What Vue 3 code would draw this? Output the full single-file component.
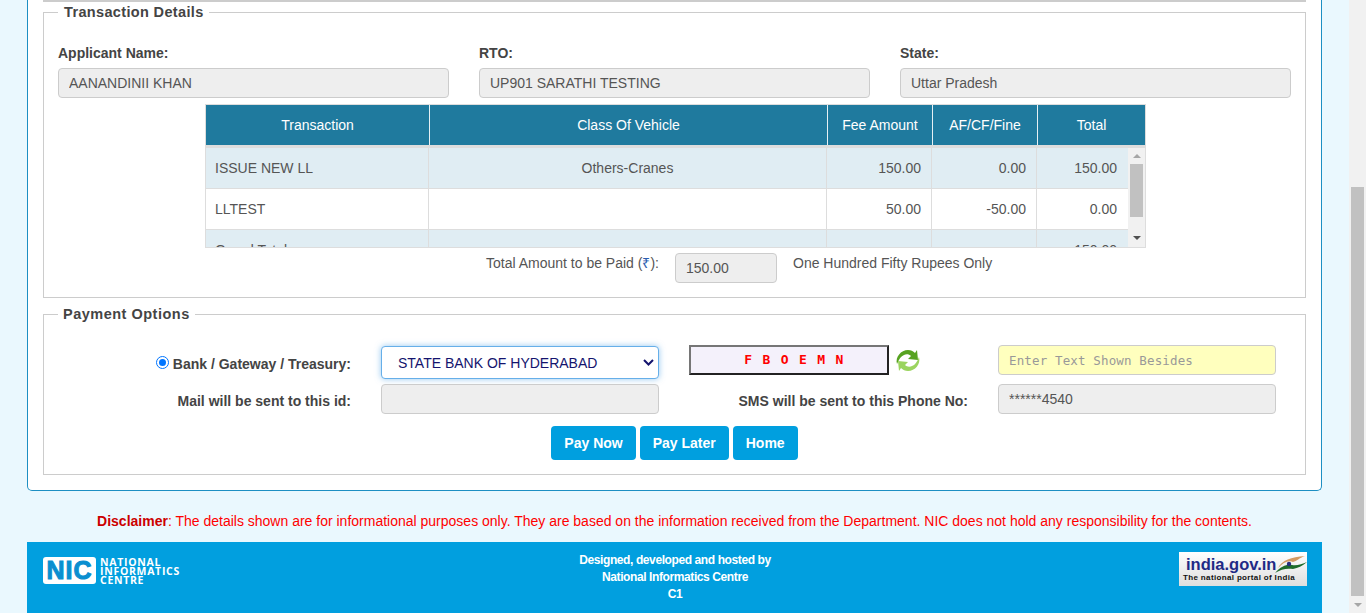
<script setup>
const info = [
  { label: 'Applicant Name:', value: 'AANANDINII KHAN' },
  { label: 'RTO:', value: 'UP901 SARATHI TESTING' },
  { label: 'State:', value: 'Uttar Pradesh' },
]
const rows = [
  { t: 'ISSUE NEW LL', c: 'Others-Cranes', f: '150.00', a: '0.00', total: '150.00' },
  { t: 'LLTEST', c: '', f: '50.00', a: '-50.00', total: '0.00' },
  { t: 'Grand Total', c: '', f: '', a: '', total: '150.00' },
]
</script>

<template>
  <div class="page">
    <div class="main">
      <div class="panel">
        <div class="prev-line"></div>
        <fieldset class="box first">
          <legend>Transaction Details</legend>
          <div class="info">
            <div v-for="i in info" :key="i.label" class="info-col">
              <label>{{ i.label }}</label>
              <input class="ctl" disabled :value="i.value" />
            </div>
          </div>
          <div class="table-wrap">
            <div class="thead">
              <div class="th c1">Transaction</div>
              <div class="th c2">Class Of Vehicle</div>
              <div class="th c3">Fee Amount</div>
              <div class="th c4">AF/CF/Fine</div>
              <div class="th c5">Total</div>
            </div>
            <div class="tscroll">
              <div class="tbody">
                <div v-for="(r, n) in rows" :key="r.t" class="tr" :class="{ odd: n % 2 === 0 }">
                  <div class="td c1">{{ r.t }}</div>
                  <div class="td c2 mid">{{ r.c }}</div>
                  <div class="td c3 num">{{ r.f }}</div>
                  <div class="td c4 num">{{ r.a }}</div>
                  <div class="td c5 num">{{ r.total }}</div>
                </div>
              </div>
              <div class="vbar">
                <i class="up"></i>
                <b class="thumb"></b>
                <i class="down"></i>
              </div>
            </div>
          </div>
          <div class="amount">
            <span>Total Amount to be Paid (<em>₹</em>):</span>
            <input class="ctl amt" disabled value="150.00" />
            <span>One Hundred Fifty Rupees Only</span>
          </div>
        </fieldset>

        <fieldset class="box second">
          <legend>Payment Options</legend>
          <div class="pay-row one">
            <div class="lbl left">
              <span class="radio"></span>
              <span>Bank / Gateway / Treasury:</span>
            </div>
            <div class="select">
              <span>STATE BANK OF HYDERABAD</span>
              <svg width="11" height="7" viewBox="0 0 11 7"><path d="M1 1l4.500 4.500L10 1" fill="none" stroke="#14146e" stroke-width="2"/></svg>
            </div>
            <div class="captcha-cell">
              <div class="captcha">F B O E M N</div>
              <svg class="refresh" width="26" height="23" viewBox="0 0 26 23">
                <path d="M2 15C0 8 6 1 13 1c3 0 5 1 7 3l2-3 1 10-10-1 3-3c-2-2-5-2-7-1-3 1-5 4-7 9z" fill="#57a321"/>
                <path d="M24 8c2 7-4 14-11 14-3 0-5-1-7-3l-2 3-1-10 10 1-3 3c2 2 5 2 7 1 3-1 5-4 7-9z" fill="#9bd45f"/>
              </svg>
            </div>
            <input class="ctl yellow" placeholder="Enter Text Shown Besides" />
          </div>
          <div class="pay-row two">
            <div class="lbl">Mail will be sent to this id:</div>
            <input class="ctl mail" disabled />
            <div class="lbl sms">SMS will be sent to this Phone No:</div>
            <input class="ctl phone" disabled value="******4540" />
          </div>
          <div class="btns">
            <button>Pay Now</button>
            <button>Pay Later</button>
            <button>Home</button>
          </div>
        </fieldset>
      </div>

      <p class="disclaimer"><b>Disclaimer</b>: The details shown are for informational purposes only. They are based on the information received from the Department. NIC does not hold any responsibility for the contents.</p>

      <footer>
        <div class="nic">
          <div class="nic-mark">NIC</div>
          <div class="nic-name">NATIONAL<br />INFORMATICS<br />CENTRE</div>
        </div>
        <div class="foot-text">
          <div>Designed, developed and hosted by</div>
          <div>National Informatics Centre</div>
          <div>C1</div>
        </div>
        <div class="india">
          <div class="india-top">
            <span>india.gov.in</span>
            <svg width="34" height="19" viewBox="0 0 34 19">
              <path d="M4 13C8 5 17 2 31 1c-6 2-8 5-12 6-5-2-10 1-15 6z" fill="#d29a62"/>
              <path d="M1 18c6-7 12-9 17-8 5 1 10-1 15-3-5 4-9 6-14 7-6-1-12 0-18 4z" fill="#1d6b2a"/>
              <circle cx="15" cy="9" r="2.200" fill="#27307f"/>
            </svg>
          </div>
          <div class="india-sub">The national portal of India</div>
        </div>
      </footer>
    </div>
    <div class="pagebar">
      <i class="up"></i>
      <b class="thumb"></b>
      <i class="down"></i>
    </div>
  </div>
</template>

<style>
html, body { margin: 0; height: 613px; overflow: hidden; background: #eaf8fe; }
</style>

<style scoped>
.page {
  display: flex;
  width: 1366px;
  height: 613px;
  overflow: hidden;
  font-family: "Liberation Sans", Arial, sans-serif;
  font-size: 14px;
  color: #555;
  background: #eaf8fe;
}
.main { width: 1349px; flex: none; padding: 0 27px; box-sizing: border-box; }
.panel {
  width: 1295px;
  height: 491px;
  box-sizing: border-box;
  background: #fff;
  border: 1px solid #1d8fc3;
  border-top: 0;
  border-radius: 0 0 5px 5px;
  padding: 0 15px;
}
.prev-line { height: 2px; background: #ccc; margin-bottom: 3px; }
.box {
  margin: 0;
  padding: 0 14px;
  border: 1px solid #ccc;
  min-width: 0;
  box-sizing: border-box;
}
legend {
  font-weight: bold;
  font-size: 14.500px;
  line-height: 14px;
  letter-spacing: .35px;
  color: #444;
  padding: 0 5px 0 6px;
  margin-left: 0;
}
.second legend { letter-spacing: .5px; padding-left: 5px; }
.first { height: 293px; }
.second { height: 168px; margin-top: 9px; }
.info { display: flex; gap: 30px; margin-top: 24px; }
.info-col { width: 391px; display: flex; flex-direction: column; }
.info-col label { font-weight: bold; color: #444; line-height: 20px; margin-bottom: 5px; }
.ctl {
  box-sizing: border-box;
  height: 30px;
  border: 1px solid #ccc;
  border-radius: 4px;
  background: #eee;
  padding: 0 10px;
  font: 14px "Liberation Sans", Arial, sans-serif;
  color: #555;
  opacity: 1;
  margin: 0;
  outline: 0;
}
.table-wrap {
  width: 941px;
  height: 144px;
  box-sizing: border-box;
  margin: 6px 0 0 147px;
  background: #ddd;
  padding: 1px 0 0 1px;
}
.thead { display: flex; height: 40px; background: #1f7a9e; width: 939px; }
.th {
  box-sizing: border-box;
  color: #fff;
  text-align: center;
  line-height: 40px;
  border-right: 1px solid #e6f0f4;
}
.th.c1 { width: 224px; }
.th.c2 { width: 398px; }
.th.c3 { width: 105px; }
.th.c4 { width: 105px; }
.th.c5 { width: 107px; border-right: 0; }
.tscroll {
  display: flex;
  height: 100px;
  margin-top: 3px;
  overflow: hidden;
  background: #fff;
  width: 939px;
  border-bottom: 1px solid #ddd;
  box-sizing: border-box;
}
.tbody { width: 922px; flex: none; }
.tr { display: flex; height: 41px; box-sizing: border-box; border-bottom: 1px solid #ddd; background: #fff; }
.tr.odd { background: #e0edf3; }
.td {
  box-sizing: border-box;
  line-height: 40px;
  padding: 0 9px;
  border-right: 1px solid #ddd;
  white-space: nowrap;
}
.td.c1 { width: 223px; }
.td.c2 { width: 398px; }
.td.c3 { width: 105px; }
.td.c4 { width: 105px; }
.td.c5 { width: 91px; border-right: 0; }
.mid { text-align: center; }
.num { text-align: right; }
.td.num { padding-right: 10px; }
.td.c5.num { padding-right: 11px; }
.vbar {
  position: relative;
  flex: none;
  width: 17px;
  background: #f1f1f1;
}
.thumb { position: absolute; background: #c1c1c1; display: block; }
.vbar .thumb { left: 2px; width: 13px; top: 16px; height: 53px; }
.up, .down { position: absolute; left: 50%; width: 0; height: 0; margin-left: -4px; border: 4px solid transparent; }
.up { border-bottom-color: #a6a6a6; border-top: 0; }
.down { border-top-color: #505050; border-bottom: 0; }
.vbar .up { top: 6px; }
.vbar .down { bottom: 7px; }
.amount {
  display: flex;
  align-items: flex-start;
  margin-top: 5px;
  padding-left: 428px;
  line-height: 20px;
}
.amount em { font-style: normal; color: #2a5db0; }
.amt { width: 102px; margin: 0 16px; }
.pay-row { display: flex; align-items: center; position: relative; }
.one { height: 33px; margin-top: 25px; }
.two { height: 30px; margin-top: 5px; }
.lbl {
  width: 293px;
  margin-right: 30px;
  text-align: right;
  font-weight: bold;
  color: #444;
  flex: none;
  box-sizing: border-box;
}
.two .lbl { padding-top: 3px; }
.left { display: flex; justify-content: flex-end; align-items: center; gap: 4px; padding-top: 2px; }
.radio {
  width: 13px;
  height: 13px;
  box-sizing: border-box;
  border-radius: 50%;
  border: 1px solid #0075ff;
  padding: 2px;
  background: #0075ff content-box;
  margin-top: -3px;
}
.select {
  width: 278px;
  height: 33px;
  flex: none;
  box-sizing: border-box;
  border: 1px solid #66afe9;
  border-radius: 4px;
  box-shadow: 0 0 6px rgba(102, 175, 233, .7);
  display: flex;
  align-items: center;
  justify-content: space-between;
  padding: 0 4px 0 16px;
  color: #14146e;
  background: #fff;
}
.captcha-cell { display: flex; align-items: center; align-self: flex-start; margin: -1px 0 0 30px; width: 309px; flex: none; }
.captcha {
  box-sizing: border-box;
  width: 200px;
  height: 30px;
  border: 2px solid;
  border-color: #767676 #222 #222 #767676;
  background: #f4f1fb;
  color: #f00;
  font: bold 13px/26px "DejaVu Sans Mono", monospace;
  letter-spacing: 1.300px;
  text-align: center;
  padding-left: 11px;
}
.refresh { margin-left: 6px; }
.yellow {
  width: 278px;
  align-self: flex-start;
  margin-top: -1px;
  background: #ffffbe;
  border-color: #ccc;
  font: 12.500px "DejaVu Sans Mono", monospace;
  letter-spacing: .14px;
}
.yellow::placeholder { color: #999; opacity: 1; }
.mail { width: 278px; flex: none; }
.sms { width: 309px; margin: 0 0 0 30px; padding-right: 30px; }
.two .sms { padding-right: 30px; }
.phone { width: 278px; flex: none; }
.btns { display: flex; gap: 4px; justify-content: center; margin-top: 12px; }
button {
  height: 34px;
  border: 0;
  border-radius: 4px;
  background: #009fdf;
  color: #fff;
  font: bold 14px "Liberation Sans", Arial, sans-serif;
  padding: 0 13px;
}
.disclaimer {
  margin: 0;
  height: 51px;
  line-height: 60px;
  text-align: center;
  color: #f00;
  font-size: 14px;
  white-space: nowrap;
}
.disclaimer b { color: #c00; }
footer {
  width: 1295px;
  height: 71px;
  background: #019fdf;
  color: #fff;
  display: grid;
  grid-template-columns: 1fr auto 1fr;
  padding: 10px 15px 0 16px;
  box-sizing: border-box;
}
.nic { display: flex; align-items: flex-start; gap: 4px; padding-top: 5px; }
.nic-mark {
  width: 53px;
  height: 27px;
  box-sizing: border-box;
  background: #fff;
  border-radius: 3px;
  color: #0a8fd0;
  -webkit-text-stroke: 1px #0a8fd0;
  font: 900 25px/27px "Liberation Sans", sans-serif;
  text-align: center;
  letter-spacing: 1px;
}
.nic-name { font: bold 10.500px/9px "Open Sans", "Liberation Sans", sans-serif; letter-spacing: .7px; padding-top: 1px; }
.foot-text { text-align: center; font-weight: bold; font-size: 12px; letter-spacing: -.4px; line-height: 17px; }
.india {
  justify-self: end;
  width: 128px;
  height: 34px;
  background: linear-gradient(#fff, #dedede);
  box-sizing: border-box;
  padding: 3px 0 0 4px;
}
.india-top { display: flex; align-items: center; height: 18px; padding-left: 3px; color: #1f2a86; font: bold 16.500px/18px "Liberation Sans", sans-serif; }
.india-top svg { margin-left: -2px; flex: none; }
.india-sub { font: bold 8px/10px "Liberation Sans", sans-serif; color: #111; letter-spacing: .35px; white-space: nowrap; }
.pagebar { position: relative; width: 17px; height: 613px; background: #f1f1f1; flex: none; }
.pagebar .thumb { left: 2px; width: 13px; top: 187px; height: 409px; }
.pagebar .down { bottom: 6px; border-top-color: #a6a6a6; }
.pagebar .up { display: none; }
</style>
